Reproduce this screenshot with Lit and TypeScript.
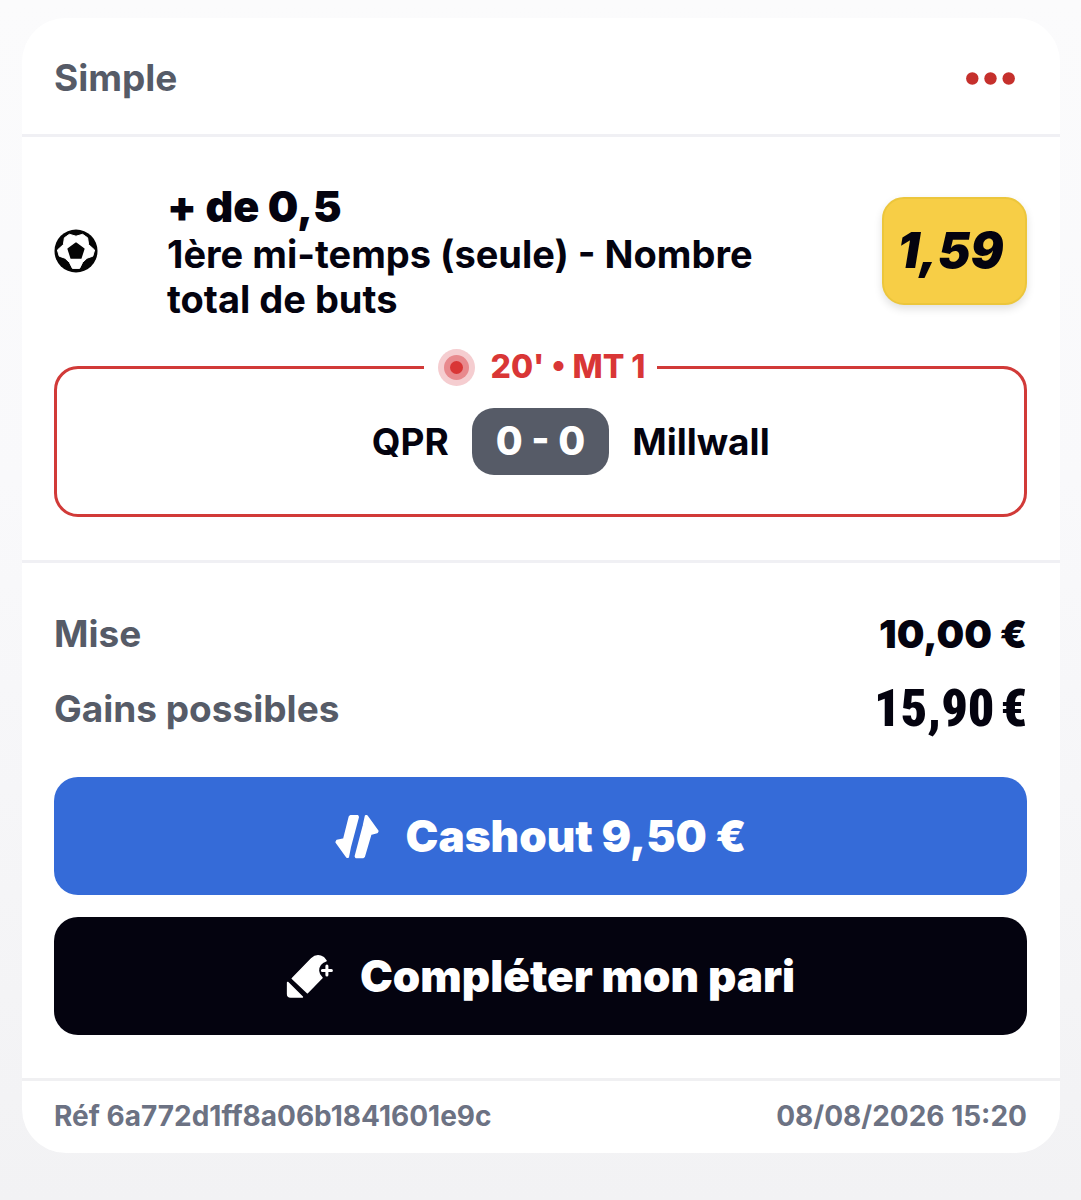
import { LitElement, html, css, svg } from "lit";
import { customElement, property } from "lit/decorators.js";

const ballIcon = svg`
  <circle cx="22" cy="22" r="21.5" fill="#050505"/>
  <path fill="#fff" stroke="#fff" stroke-linejoin="round" d="M22 7.2 L28.6 5.3 L33.6 8.8 L34.6 15.6 L40.6 21 L38.8 27.2 L33 29.2 L28.6 33.4 L25.6 39.4 L18.4 39.4 L15.4 33.4 L11 29.2 L5.2 27.2 L3.4 21 L9.4 15.6 L10.4 8.8 L15.4 5.3 Z"/>
  <path fill="#050505" stroke="#050505" stroke-width="1.5" stroke-linejoin="round" d="M22 14.2 L29.8 19.9 L26.9 29 L17.1 29 L14.2 19.9 Z"/>`;

const swapIcon = svg`
  <g fill="#fff" stroke="#fff" stroke-width="2" stroke-linejoin="round">
    <path d="M15.6 2 H22.6 L23 3 L15 33 L13 43 H12 L1.4 28.2 L2 26.8 L9 25.2 L14.6 3 Z"/>
    <path d="M30.8 2 H31.8 L42.6 17 L42 18.4 L35.6 20 L29 42.4 L28 43.2 H21 L20.6 42.2 L28.6 12 Z"/>
  </g>`;

const boostIcon = svg`
  <path fill="#fff" stroke="#fff" stroke-width="1.5" stroke-linejoin="round" d="M6.3 24.4 L25.5 4.8 Q31 -0.6 37.6 3.6 L40 6.8 Q32.4 9.4 32.4 16.8 Q32.6 20.8 36 23.8 L21.4 38.6 Z"/>
  <path fill="#fff" stroke="#fff" stroke-width="1.5" stroke-linejoin="round" d="M1.6 28.4 L16.4 43 H4.6 Q1.6 43 1.6 40 Z"/>
  <path stroke="#fff" stroke-width="3" stroke-linecap="round" d="M36.4 16.6 H45.4 M40.9 12.1 V21.1"/>`;

@customElement("live-match")
export class LiveMatch extends LitElement {
  @property() clock = "";
  @property() home = "";
  @property() away = "";
  @property() score = "";

  static styles = css`
    :host { display: block; }
    .match {
      margin: 0;
      min-width: 0;
      padding: 22px 24px 39px;
      border: 3px solid #d13a38;
      border-radius: 24px;
    }
    .clock {
      display: flex;
      align-items: center;
      gap: 16px;
      margin: 0 auto;
      padding: 0 12px 0 14px;
      color: #d93636;
      font-size: 32px;
      font-weight: 800;
      line-height: 38px;
    }
    .pulse { display: block; width: 37px; height: 37px; }
    .teams {
      display: grid;
      grid-template-columns: 1fr auto 1fr;
      align-items: center;
      gap: 23px;
      font-size: 37px;
      font-weight: 700;
      line-height: 44px;
    }
    .home { text-align: right; }
    .score {
      padding: 11px 24px 12px;
      border-radius: 22px;
      background: #565b67;
      color: #fff;
      font-size: 39px;
      font-weight: 800;
      white-space: pre;
    }
  `;

  render() {
    return html`
      <fieldset class="match">
        <legend class="clock">
          <svg class="pulse" viewBox="0 0 37 37" aria-hidden="true">
            <circle cx="18.5" cy="18.5" r="18.5" fill="#f5cdd0"/>
            <circle cx="18.5" cy="18.5" r="12.5" fill="#e8898d"/>
            <circle cx="18.5" cy="18.5" r="6.5" fill="#d93636"/>
          </svg>
          <span>${this.clock}</span>
        </legend>
        <div class="teams">
          <span class="home">${this.home}</span>
          <span class="score">${this.score}</span>
          <span>${this.away}</span>
        </div>
      </fieldset>`;
  }
}

@customElement("app-root")
export class AppRoot extends LitElement {
  static styles = css`
    :host {
      display: block;
      box-sizing: border-box;
      min-height: 100vh;
      padding: 18px 21px 24px 22px;
      background: linear-gradient(#fbfbfc, #f9f9fb 40%, #f2f2f4);
      color: #04030f;
      font-family: Inter, "Liberation Sans", sans-serif;
    }
    .card { border-radius: 44px; background: #fff; }
    .header, .footer {
      display: flex;
      justify-content: space-between;
      align-items: center;
    }
    .header { padding: 38px 33px 34px 32px; }
    .kind {
      margin: 0;
      color: #565b67;
      font-size: 37px;
      font-weight: 700;
      line-height: 44px;
    }
    button {
      border: 0;
      font-family: inherit;
      cursor: pointer;
    }
    .more { padding: 12px; background: none; }
    .more svg { display: block; width: 49px; height: 13px; }
    .section {
      border-top: 3px solid #f0f0f4;
      padding: 43px 33px 43px 32px;
    }
    .pick {
      display: flex;
      align-items: center;
      margin-bottom: 26px;
    }
    .ball { flex: none; width: 44px; height: 44px; margin-right: 69px; }
    .bet { flex: 1; padding-right: 100px; }
    .outcome {
      margin: 0;
      font-size: 43px;
      font-weight: 900;
      line-height: 52px;
    }
    .market {
      margin: 0;
      font-size: 38px;
      font-weight: 700;
      line-height: 45px;
    }
    .odds {
      box-sizing: border-box;
      min-width: 145px;
      padding: 0 18px 0 10px;
      border: 2px solid #ecc63c;
      border-radius: 22px;
      background: #f7ce46;
      box-shadow: 0 4px 8px rgba(0, 0, 0, 0.12);
      font-size: 49px;
      font-style: italic;
      font-weight: 900;
      line-height: 104px;
      text-align: center;
    }
    .sums { display: grid; gap: 20px; margin: 0 0 41px; }
    .line {
      display: flex;
      justify-content: space-between;
      align-items: center;
      font-size: 37px;
      font-weight: 700;
      line-height: 55px;
    }
    dt { color: #565b67; }
    dd { margin: 0; }
    .stake { font-size: 39px; font-weight: 900; }
    .gain {
      font-family: "Roboto Condensed", Inter, sans-serif;
      font-size: 52px;
      font-weight: 900;
    }
    .actions { display: grid; gap: 22px; }
    .action {
      display: flex;
      justify-content: center;
      align-items: center;
      gap: 27px;
      padding: 33px 24px;
      border-radius: 24px;
      color: #fff;
      font-size: 44px;
      font-weight: 900;
      line-height: 52px;
    }
    .action svg { flex: none; width: 44px; height: 45px; }
    .action .boost { width: 47px; }
    .cashout { background: #356bd8; }
    .complete { background: #04030f; }
    .footer {
      border-top: 3px solid #f0f0f2;
      padding: 18px 33px 20px 32px;
      color: #6c7283;
      font-size: 28px;
      font-weight: 700;
      line-height: 34px;
    }
  `;

  render() {
    return html`
      <article class="card">
        <header class="header">
          <h1 class="kind">Simple</h1>
          <button class="more" type="button" aria-label="Options">
            <svg viewBox="0 0 49 13" fill="#c5302c">
              <circle cx="6.3" cy="6.5" r="6.2"/>
              <circle cx="24.5" cy="6.5" r="6.2"/>
              <circle cx="42.7" cy="6.5" r="6.2"/>
            </svg>
          </button>
        </header>
        <section class="section">
          <div class="pick">
            <svg class="ball" viewBox="0 0 44 44" aria-hidden="true">${ballIcon}</svg>
            <div class="bet">
              <h2 class="outcome">+ de 0,5</h2>
              <p class="market">1ère mi-temps (seule) - Nombre total de buts</p>
            </div>
            <div class="odds">1,59</div>
          </div>
          <live-match clock="20' • MT 1" home="QPR" score="0 - 0" away="Millwall"></live-match>
        </section>
        <section class="section">
          <dl class="sums">
            <div class="line"><dt>Mise</dt><dd class="stake">10,00 €</dd></div>
            <div class="line"><dt>Gains possibles</dt><dd class="gain">15,90&#8239;€</dd></div>
          </dl>
          <div class="actions">
            <button class="action cashout" type="button">
              <svg viewBox="0 0 44 45" aria-hidden="true">${swapIcon}</svg>
              <span>Cashout 9,50 €</span>
            </button>
            <button class="action complete" type="button">
              <svg class="boost" viewBox="0 0 47 45" aria-hidden="true">${boostIcon}</svg>
              <span>Compléter mon pari</span>
            </button>
          </div>
        </section>
        <footer class="footer">
          <span>Réf 6a772d1ff8a06b1841601e9c</span>
          <time datetime="2026-08-08T15:20">08/08/2026 15:20</time>
        </footer>
      </article>`;
  }
}
